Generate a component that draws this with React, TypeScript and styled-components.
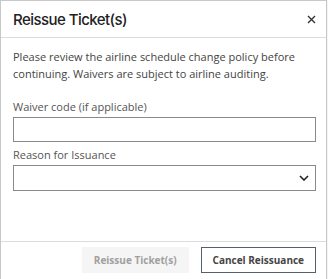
import React from "react";
import styled, { createGlobalStyle } from "styled-components";

const Global = createGlobalStyle`
  html, body { margin: 0; padding: 0; background: #f4f4f4; }
  body { font-family: "Open Sans", "Liberation Sans", sans-serif; }
`;

const Dialog = styled.div`
  width: 325px;
  height: 290px;
  background: #fff;
  border: 1px solid #c8c8c8;
  display: flex;
  flex-direction: column;
  box-sizing: content-box;
`;

const Header = styled.div`
  height: 36px;
  display: flex;
  align-items: center;
  justify-content: space-between;
  padding: 0 9px 0 12px;
  border-bottom: 1px solid #dcdcdc;
`;

const Title = styled.h2`
  margin: 0;
  font-family: "Inter", "Liberation Sans", sans-serif;
  font-weight: 500;
  font-size: 15px;
  letter-spacing: -0.55px;
  color: #222;
`;

const Close = styled.button`
  border: none;
  background: none;
  padding: 0;
  width: 12px;
  height: 12px;
  display: flex;
  align-items: center;
  justify-content: center;
`;

const Body = styled.div`
  height: 203px;
  padding: 10px 11px 0 12px;
  box-sizing: border-box;
  display: flex;
  flex-direction: column;
`;

const Text = styled.p`
  margin: 0 0 16px 0;
  font-size: 11px;
  line-height: 17px;
  color: #444;
`;

const Label = styled.label`
  font-size: 11px;
  line-height: 17px;
  color: #555;
  margin-bottom: 2px;
`;

const Input = styled.input`
  height: 25px;
  box-sizing: border-box;
  border: 1px solid #8a8a8a;
  border-radius: 0;
  margin: 0 0 4px 0;
  width: 303px;
`;

const SelectBox = styled.div`
  height: 26px;
  width: 303px;
  box-sizing: border-box;
  border: 1px solid #8a8a8a;
  display: flex;
  align-items: center;
  justify-content: flex-end;
  padding-right: 6px;
`;

const Footer = styled.div`
  border-top: 1px solid #dcdcdc;
  display: flex;
  justify-content: flex-end;
  gap: 12px;
  padding: 5px 10px 0 0;
`;

const Button = styled.button<{ $primary?: boolean }>`
  height: 26px;
  box-sizing: border-box;
  font-family: "Open Sans", "Liberation Sans", sans-serif;
  font-weight: 700;
  font-size: 10px;
  padding: 0 11px;
  background: ${(p) => (p.$primary ? "#f5f5f5" : "#fff")};
  color: ${(p) => (p.$primary ? "#a0a0a0" : "#444")};
  border: ${(p) => (p.$primary ? "1px solid #f5f5f5" : "1px solid #56606a")};
  border-radius: 0;
`;

export default function App() {
  return (
    <>
      <Global />
      <Dialog>
        <Header>
          <Title>Reissue Ticket(s)</Title>
          <Close aria-label="Close">
            <svg width="9" height="9" viewBox="0 0 9 9">
              <path d="M1 1L8 8M8 1L1 8" stroke="#333" strokeWidth="1.4" />
            </svg>
          </Close>
        </Header>
        <Body>
          <Text>
            Please review the airline schedule change policy before continuing. Waivers are subject to airline auditing.
          </Text>
          <Label>Waiver code (if applicable)</Label>
          <Input />
          <Label>Reason for Issuance</Label>
          <SelectBox>
            <svg width="10" height="6" viewBox="0 0 10 6">
              <path d="M1 1L5 5L9 1" stroke="#222" strokeWidth="1.6" fill="none" />
            </svg>
          </SelectBox>
        </Body>
        <Footer>
          <Button $primary disabled>Reissue Ticket(s)</Button>
          <Button>Cancel Reissuance</Button>
        </Footer>
      </Dialog>
    </>
  );
}
